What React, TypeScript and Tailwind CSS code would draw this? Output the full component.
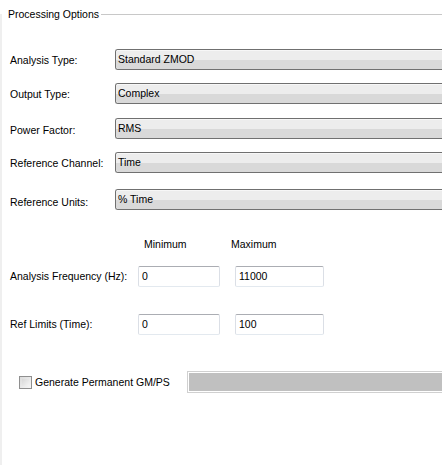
import React from "react";

function Combo({ text }: { text: string }) {
  return (
    <div className="flex-1 h-[21px] border border-[#707070] border-r-0 rounded-l-[3px] flex flex-col overflow-hidden relative">
      <div className="h-[1px] bg-[#f7f7f7]" />
      <div className="flex-1 bg-[#ededed]" />
      <div className="flex-1 bg-[#d9d9d9]" />
      <span className="absolute left-[2px] top-0 h-full flex items-center text-black">{text}</span>
    </div>
  );
}

function Field({ value, w }: { value: string; w: string }) {
  return (
    <div className={`${w} h-[21px] bg-white border border-t-[#abadb3] border-l-[#dbdfe6] border-r-[#dbdfe6] border-b-[#e3e9ef] rounded-[2px] flex items-center pl-[3px] text-black`}>
      {value}
    </div>
  );
}

export default function App() {
  return (
    <div
      className="w-[442px] h-[465px] bg-white overflow-hidden text-[10.5px] leading-none text-black flex flex-col"
      style={{ fontFamily: '"Liberation Sans", Arial, sans-serif' }}
    >
      {/* header */}
      <div className="h-[28px] flex items-start pt-[9px]">
        <span className="pl-[8px] pr-[2px] whitespace-nowrap">Processing Options</span>
        <div className="flex-1 mt-[5px] h-[1px] bg-[#c8c8c8]" />
      </div>
      <div className="flex-1 flex">
        <div className="w-[2px] bg-[#efefef] -mt-[14px]" />
        <div className="flex-1 flex flex-col pl-[8px]">
          <div className="h-[21px] mt-[21px] flex items-center">
            <span className="w-[105px] pt-[1px]">Analysis Type:</span>
            <Combo text="Standard ZMOD" />
          </div>
          <div className="h-[21px] mt-[13px] flex items-center">
            <span className="w-[105px] pt-[1px]">Output Type:</span>
            <Combo text="Complex" />
          </div>
          <div className="h-[21px] mt-[14px] flex items-center">
            <span className="w-[105px] pt-[4px]">Power Factor:</span>
            <Combo text="RMS" />
          </div>
          <div className="h-[21px] mt-[13px] flex items-center">
            <span className="w-[105px] pt-[1px] whitespace-nowrap">Reference Channel:</span>
            <Combo text="Time" />
          </div>
          <div className="h-[21px] mt-[16px] flex items-center">
            <span className="w-[105px] pt-[5px]">Reference Units:</span>
            <Combo text="% Time" />
          </div>

          <div className="mt-[28px] flex h-[12px] items-center">
            <span className="ml-[134px] w-[87px]">Minimum</span>
            <span>Maximum</span>
          </div>

          <div className="mt-[16px] h-[21px] flex items-center">
            <span className="w-[128px] whitespace-nowrap">Analysis Frequency (Hz):</span>
            <Field value="0" w="w-[82px]" />
            <div className="w-[15px]" />
            <Field value="11000" w="w-[89px]" />
          </div>
          <div className="mt-[27px] h-[21px] flex items-center">
            <span className="w-[128px] whitespace-nowrap">Ref Limits (Time):</span>
            <Field value="0" w="w-[82px]" />
            <div className="w-[15px]" />
            <Field value="100" w="w-[89px]" />
          </div>

          <div className="mt-[36px] h-[22px] flex items-center">
            <div className="ml-[9px] w-[13px] h-[13px] border border-[#8f8f8f] bg-gradient-to-br from-[#dcdcdc] to-[#f6f6f6] p-[2px]">
              <div className="w-full h-full bg-gradient-to-br from-[#d8d8d8] to-[#f4f4f4]" />
            </div>
            <span className="ml-[3px] w-[152px] whitespace-nowrap pt-[1px]">Generate Permanent GM/PS</span>
            <div className="flex-1 h-[22px] border border-[#d0d0d0] border-r-0 p-[1px] pr-0 bg-white">
              <div className="w-full h-full bg-[#c0c0c0]" />
            </div>
          </div>
        </div>
      </div>
    </div>
  );
}
